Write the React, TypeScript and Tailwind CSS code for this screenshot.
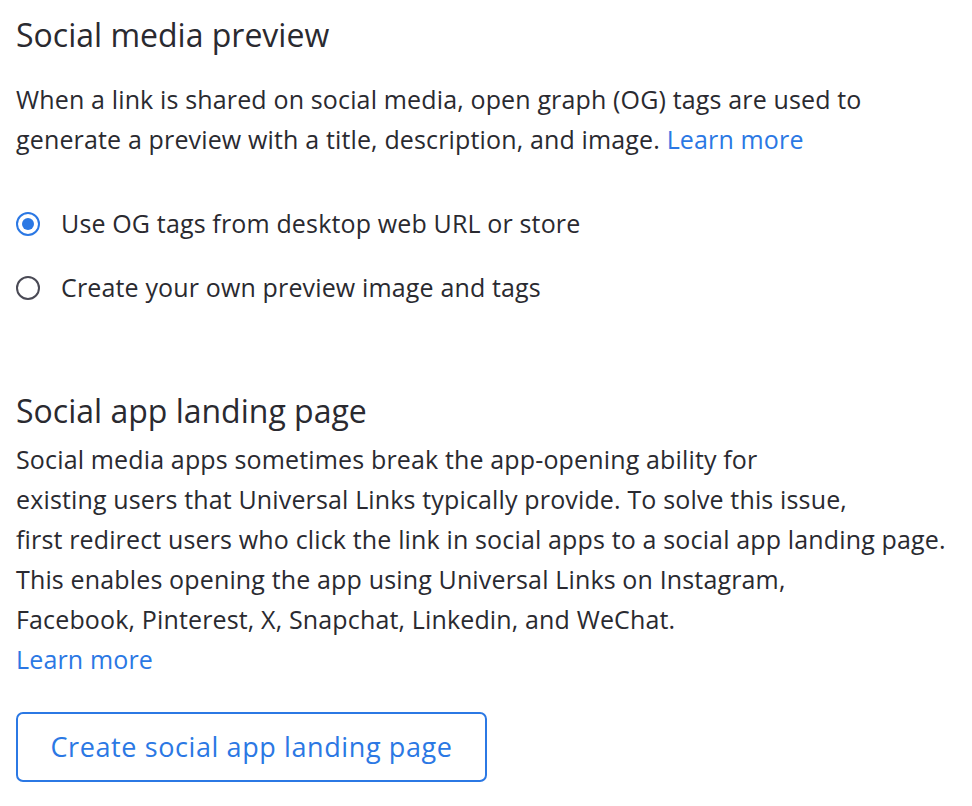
export default function App() {
  return (
    <div
      className="min-h-[806px] w-[972px] bg-white px-4 pt-[12px] text-[#2a2a30]"
      style={{ fontFamily: '"Open Sans", "Noto Sans", sans-serif' }}
    >
      <h2 className="text-[32px] leading-[46px]">Social media preview</h2>
      <p className="mt-[21px] text-[25px] leading-[40px] tracking-[0.15px]">
        When a link is shared on social media, open graph (OG) tags are used to
        <br />
        generate a preview with a title, description, and image.{' '}
        <a className="text-[#2b78e4]">Learn more</a>
      </p>

      <div className="mt-[53px] flex flex-col gap-[40px]">
        <label className="flex h-[24px] items-center gap-[21px] text-[25px] tracking-[0.15px]">
          <span className="flex h-[24px] w-[24px] items-center justify-center rounded-full border-[2.5px] border-[#2b78e4]">
            <span className="h-[12px] w-[12px] rounded-full bg-[#2b78e4]" />
          </span>
          Use OG tags from desktop web URL or store
        </label>
        <label className="flex h-[24px] items-center gap-[21px] text-[25px] tracking-[0.15px]">
          <span className="h-[24px] w-[24px] rounded-full border-[2.5px] border-[#4a4a55]" />
          Create your own preview image and tags
        </label>
      </div>

      <h2 className="mt-[88px] text-[32px] leading-[46px]">Social app landing page</h2>
      <p className="mt-[5px] text-[25px] leading-[40px] tracking-[0.15px]">
        Social media apps sometimes break the app-opening ability for
        <br />
        existing users that Universal Links typically provide. To solve this issue,
        <br />
        first redirect users who click the link in social apps to a social app landing page.
        <br />
        This enables opening the app using Universal Links on Instagram,
        <br />
        Facebook, Pinterest, X, Snapchat, Linkedin, and WeChat.
        <br />
        <a className="text-[#2b78e4]">Learn more</a>
      </p>

      <button className="mt-[33px] flex h-[70px] w-[471px] items-center justify-center rounded-[7px] border-2 border-[#2b78e4] text-[27px] tracking-[0.6px] text-[#2b78e4]">
        Create social app landing page
      </button>
    </div>
  )
}
